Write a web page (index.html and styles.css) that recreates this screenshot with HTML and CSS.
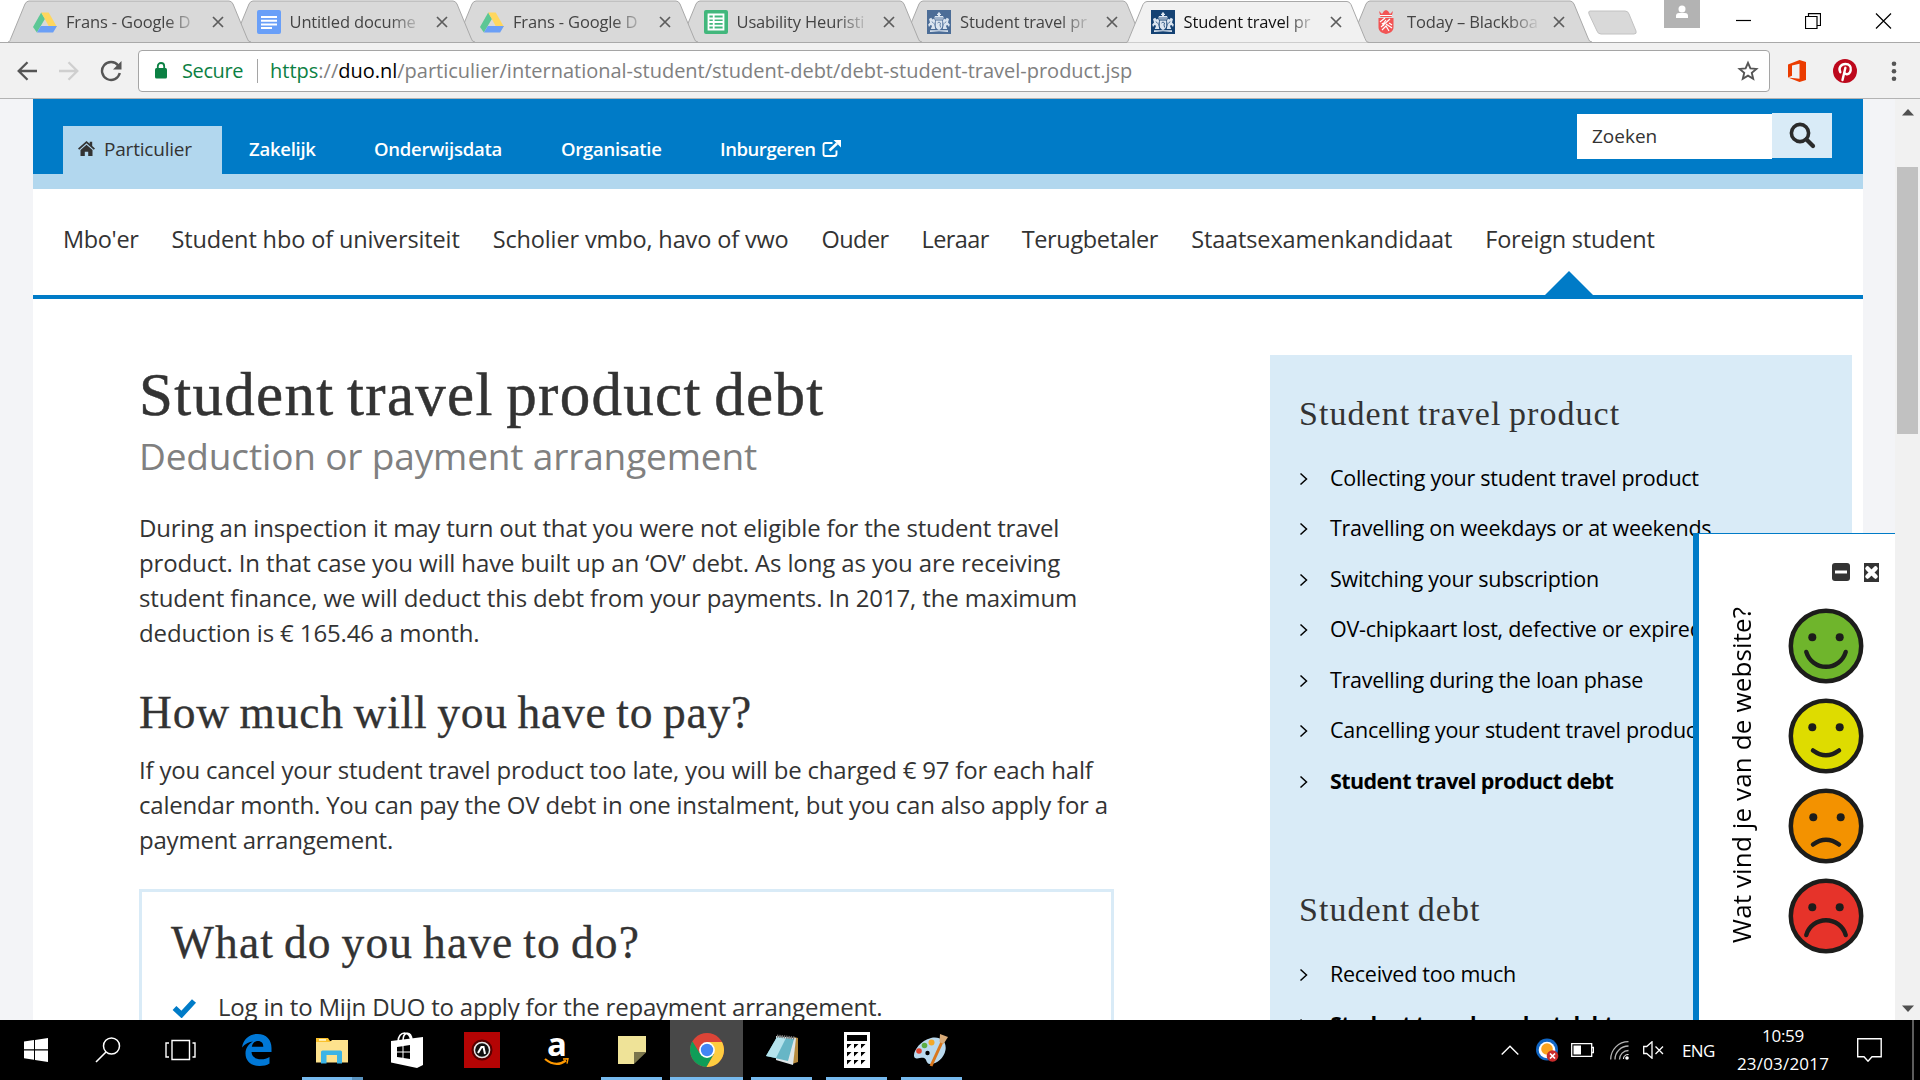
FILE: index.html
```html
<!DOCTYPE html>
<html lang="en">
<head>
<meta charset="utf-8">
<title>Student travel product debt</title>
<link rel="stylesheet" href="styles.css">
</head>
<body>
<svg class="defs" width="0" height="0">
  <symbol id="tabshape" viewBox="0 0 243 42"><path d="M0 42C2 42 2 40 3 38L17 4Q18.500 1 21 1H221Q223.500 1 225 4L239 38Q240 42 243 42" stroke="#a9a9a9"/></symbol>
  <symbol id="drive" viewBox="0 0 24 24"><path fill="#5cc795" d="M8.200 2.500L0 17l3.900 5.500L12 8.800z"/><path fill="#ffd75e" d="M8.200 2.500h7.500L24 17h-7.800z"/><path fill="#6b9ff6" d="M7.800 16H24l-3.900 6.500H3.900z"/></symbol>
  <symbol id="docs" viewBox="0 0 24 24"><rect width="24" height="24" rx="2" fill="#699ff8"/><path stroke="#fff" stroke-width="2" d="M4 7h16M4 10.700h16M4 14.400h16M4 18h11"/></symbol>
  <symbol id="sheets" viewBox="0 0 24 24"><rect width="24" height="24" rx="2" fill="#42b77c"/><path fill="none" stroke="#fff" stroke-width="1.800" d="M4.500 4.500h15v15h-15zM4.500 8.500h15M4.500 12h15M4.500 15.700h15M9.700 4.500v15"/></symbol>
  <symbol id="crest" viewBox="0 0 24 24"><g fill="#dbe5f0"><path d="M11 2.500h2v1.300h1v1.300h-1V6h3l.6 1.500-.8 2H8.200l-.8-2L8 6h3v-.9h-1V3.800h1z"/><path d="M8.700 10.500h6.600V16c0 2.200-1.700 3.300-3.300 4-1.600-.7-3.300-1.800-3.300-4z"/><path d="M2 9l2.200-1.200 1.300 1.700 1.700-1 .9 2.400-.8 3.700 1 4.500H3.800l1.300-3.300L3.500 15 2 17l-.8-2.600L3 12.500zM22 9l-2.200-1.200-1.300 1.700-1.700-1-.9 2.400.8 3.700-1 4.500h4.500l-1.300-3.300 1.600-.8L22 17l.8-2.600-1.800-1.900z"/><path d="M3 20.300h18V22l-9-.7-9 .7z"/></g><path fill="none" stroke="currentColor" stroke-width=".8" d="M10.500 13l1.500-1 1.500 1-.5 2 .7 2.500M5 11.500l1.500 2M19 11.500l-1.500 2M8 8h8"/></symbol>
  <symbol id="shield" viewBox="0 0 18 24"><path fill="#f25454" d="M2 1l3 3 2-3 2-1 2 1 2 3 3-3-1.500 6h-11z"/><path fill="#f25454" d="M1.500 8h15v9c0 4-3 6-7.500 7-4.500-1-7.500-3-7.500-7z"/><path fill="none" stroke="#fff" stroke-width="1.200" d="M3 12l5-4M4 17l9-8M9 14l6 4M5 20l4-4 3 5M12 13l3 2M3 5.500h12M9 10l-3 4M5 13l2 3"/></symbol>
  <symbol id="x" viewBox="0 0 12 12"><path d="M1 1l10 10M11 1L1 11" fill="none" stroke="#5c5c5c" stroke-width="1.700"/></symbol>
  <symbol id="chev" viewBox="0 0 10 14"><path d="M1.500 1.500L7.500 7l-6 5.500" fill="none" stroke="#000" stroke-width="1.500"/></symbol>
</svg>

<header class="tabstrip">
  <div class="tab"><svg class="shape"><use href="#tabshape"/></svg><svg class="fav"><use href="#drive"/></svg><span>Frans - Google D</span><svg class="close"><use href="#x"/></svg></div>
  <div class="tab"><svg class="shape"><use href="#tabshape"/></svg><svg class="fav"><use href="#docs"/></svg><span>Untitled docume</span><svg class="close"><use href="#x"/></svg></div>
  <div class="tab"><svg class="shape"><use href="#tabshape"/></svg><svg class="fav"><use href="#drive"/></svg><span>Frans - Google D</span><svg class="close"><use href="#x"/></svg></div>
  <div class="tab"><svg class="shape"><use href="#tabshape"/></svg><svg class="fav"><use href="#sheets"/></svg><span>Usability Heuristi</span><svg class="close"><use href="#x"/></svg></div>
  <div class="tab"><svg class="shape"><use href="#tabshape"/></svg><svg class="fav crest dim"><use href="#crest"/></svg><span>Student travel pr</span><svg class="close"><use href="#x"/></svg></div>
  <div class="tab active"><svg class="shape"><use href="#tabshape"/></svg><svg class="fav crest"><use href="#crest"/></svg><span>Student travel pr</span><svg class="close"><use href="#x"/></svg></div>
  <div class="tab"><svg class="shape"><use href="#tabshape"/></svg><svg class="fav"><use href="#shield"/></svg><span>Today – Blackboa</span><svg class="close"><use href="#x"/></svg></div>
  <svg class="newtab" width="52" height="26" viewBox="0 0 52 26"><path d="M3 1h35q3 0 4 3l7 17q1 3-2 3H14q-3 0-4-3L2 4Q1 1 3 1z" fill="#d9d9d9" stroke="#c2c2c2"/></svg>
  <div class="wincontrols">
    <svg class="user" width="36" height="28" viewBox="0 0 36 28"><path fill="#b3b3b3" d="M0 0h36v28H0z"/><circle cx="18" cy="9" r="3.500" fill="#fff"/><path fill="#fff" d="M12 18v-2q0-3 3-3h6q3 0 3 3v2z"/></svg>
    <svg width="15" height="17" viewBox="0 0 15 17"><path d="M0 7.500h15" stroke="#000" stroke-width="1.200"/></svg>
    <svg width="16" height="16" viewBox="0 0 16 16"><path d="M.5 3.500h11.500v12H.5zM3.500 3.500V.6h12v11.900H12" fill="none" stroke="#000" stroke-width="1.200"/></svg>
    <svg width="17" height="16" viewBox="0 0 17 16"><path d="M1 .5l15 15M16 .5l-15 15" stroke="#000" stroke-width="1.200"/></svg>
  </div>
</header>

<div class="toolbar">
  <svg class="back" width="20" height="20" viewBox="0 0 20 20"><path d="M20 10H2M10.500 1.200L1.700 10l8.800 8.800" fill="none" stroke="#555" stroke-width="2.300"/></svg>
  <svg class="fwd" width="20" height="20" viewBox="0 0 20 20"><path d="M0 10h18M9.500 1.200l8.800 8.800-8.800 8.800" fill="none" stroke="#cfcfcf" stroke-width="2.300"/></svg>
  <svg class="reload" width="22" height="22" viewBox="0 0 22 22"><path d="M18.200 5.500A9 9 0 1 0 19.800 13" fill="none" stroke="#555" stroke-width="2.400"/><path fill="#555" d="M21.500 1v8.500H13z"/></svg>
  <div class="omnibox">
    <svg width="12" height="17" viewBox="0 0 12 17"><rect y="6" width="12" height="10.500" rx="1.500" fill="#0b8043"/><path d="M2.800 7V4.200a3.200 3.200 0 0 1 6.400 0V7" fill="none" stroke="#0b8043" stroke-width="1.800"/></svg>
    <span class="secure">Secure</span><i class="sep"></i>
    <span class="url"><b>https</b>://<em>duo.nl</em>/particulier/international-student/student-debt/debt-student-travel-product.jsp</span>
    <svg class="star" width="22" height="22" viewBox="0 0 22 22"><path d="M11 2.800l2.400 5.600 6 .5-4.600 4 1.400 5.900L11 15.700l-5.200 3.100 1.400-5.900-4.600-4 6-.5z" fill="none" stroke="#555" stroke-width="1.900"/></svg>
  </div>
  <svg class="office" width="18" height="22" viewBox="0 0 18 22"><path fill="#eb3c00" d="M0 4.500L11.500 0 18 2v18l-6.500 2L0 17.500l11.500 1.300V3.700L4 5.600v10.200L0 17.500z"/></svg>
  <svg class="pin" width="24" height="24" viewBox="0 0 24 24"><circle cx="12" cy="12" r="12" fill="#bd081c"/><path d="M7.300 13.200C5 9 8 5 12.400 5c4 0 6 2.700 5.300 6.200-.8 4.300-5.200 5.300-6.200 2.500M12.400 8.800L9.500 21" fill="none" stroke="#fff" stroke-width="2.400" stroke-linecap="round"/></svg>
  <svg class="dots" width="6" height="20" viewBox="0 0 6 20"><g fill="#555"><circle cx="3" cy="2.700" r="2.300"/><circle cx="3" cy="10.200" r="2.300"/><circle cx="3" cy="17.700" r="2.300"/></g></svg>
</div>

<div class="viewport">
  <div class="page">
    <div class="topbar">
      <nav class="topnav">
        <a class="current"><svg width="17" height="15" viewBox="0 0 17 15"><path fill="#333" d="M8.500 0L0 7.500l1.200 1.200 7.300-6.400 7.300 6.400L17 7.500l-2.800-2.600V.8h-2.500v2zM2.500 9v6h4.300v-4.300h3.400V15h4.300V9l-6-5.200z"/></svg><span>Particulier</span></a>
        <a class="n2">Zakelijk</a><a class="n3">Onderwijsdata</a><a class="n4">Organisatie</a><a class="n5">Inburgeren<svg width="20" height="17" viewBox="0 0 20 17"><path d="M10.500 3H3.500Q1.500 3 1.500 5v9q0 2 2 2h9q2 0 2-2v-3.500" fill="none" stroke="#fff" stroke-width="1.900"/><path d="M7.500 10.500L15 3.500" stroke="#fff" stroke-width="2.600"/><path fill="#fff" d="M11.500 0H19v7.500z"/></svg></a>
      </nav>
      <div class="search"><div class="field">Zoeken</div><div class="go"><svg width="27" height="27" viewBox="0 0 27 27"><circle cx="11" cy="11" r="8.600" fill="none" stroke="#2b2b2b" stroke-width="3.600"/><path d="M17.500 17.500l6.500 6.500" stroke="#2b2b2b" stroke-width="4.200" stroke-linecap="round"/></svg></div></div>
    </div>
    <nav class="subnav">
      <a>Mbo'er</a><a class="wide">Student hbo of universiteit</a><a class="wide">Scholier vmbo, havo of vwo</a><a class="tight">Ouder</a><a class="tight">Leraar</a><a>Terugbetaler</a><a class="wide">Staatsexamenkandidaat</a><a class="here">Foreign student</a>
    </nav>
    <div class="columns">
      <main>
        <h1>Student travel product debt</h1>
        <p class="sub">Deduction or payment arrangement</p>
        <p class="text">During an inspection it may turn out that you were not eligible for the student travel<br><span class="loose">product. In that case you will have built up an ‘OV’ debt. As long as you are receiving<br>student finance, we will deduct this debt from your payments. In 2017, the maximum<br>deduction is € 165.46 a month.</span></p>
        <h2>How much will you have to pay?</h2>
        <p class="text second">If you cancel your student travel product too late, you will be charged € 97 for each half<br>calendar month. You can pay the OV debt in one instalment, but you can also apply for a<br>payment arrangement.</p>
        <section class="box">
          <h2>What do you have to do?</h2>
          <p class="todo"><svg width="25" height="20" viewBox="0 0 25 20"><path d="M2.500 10l7 6.500L22 3" fill="none" stroke="#007bc7" stroke-width="5.500"/></svg>Log in to Mijn DUO to apply for the repayment arrangement.</p>
        </section>
      </main>
      <aside>
        <h3>Student travel product</h3>
        <ul>
          <li><svg><use href="#chev"/></svg>Collecting your student travel product</li>
          <li><svg><use href="#chev"/></svg>Travelling on weekdays or at weekends</li>
          <li><svg><use href="#chev"/></svg>Switching your subscription</li>
          <li><svg><use href="#chev"/></svg>OV-chipkaart lost, defective or expired</li>
          <li><svg><use href="#chev"/></svg>Travelling during the loan phase</li>
          <li><svg><use href="#chev"/></svg>Cancelling your student travel product</li>
          <li class="bold"><svg><use href="#chev"/></svg>Student travel product debt</li>
        </ul>
        <h3 class="next">Student debt</h3>
        <ul>
          <li><svg><use href="#chev"/></svg>Received too much</li>
          <li class="bold"><svg><use href="#chev"/></svg>Student travel product debt</li>
        </ul>
      </aside>
    </div>
  </div>
  <div class="scrollbar">
    <svg width="12" height="7" viewBox="0 0 12 7"><path d="M0 6.500L6 0l6 6.500z" fill="#505050"/></svg>
    <div class="thumb"></div>
    <svg class="down" width="12" height="7" viewBox="0 0 12 7"><path d="M0 .5L6 7l6-6.500z" fill="#505050"/></svg>
  </div>
  <div class="feedback">
    <div class="question">Wat vind je van de website?</div>
    <div class="rating">
      <div class="tools"><svg width="18" height="18" viewBox="0 0 18 18"><rect width="18" height="18" rx="3" fill="#333"/><path d="M3 9h12" stroke="#fff" stroke-width="3"/></svg><svg width="15" height="19" viewBox="0 0 15 19"><path fill="#333" d="M0 0h15v19H0z"/><path d="M3.500 5.500l8 8M11.500 5.500l-8 8" stroke="#fff" stroke-width="4.500" stroke-linecap="round"/></svg></div>
      <svg class="face" viewBox="0 0 76 76"><circle cx="38" cy="38" r="35.200" fill="#6fb52c" stroke="#1d1d1b" stroke-width="4.500"/><g fill="#1d1d1b"><circle cx="24.300" cy="29.300" r="4"/><circle cx="51.700" cy="29.300" r="4"/></g><path d="M18.300 44a20.500 20.500 0 0 0 39.400 0"/></svg>
      <svg class="face" viewBox="0 0 76 76"><circle cx="38" cy="38" r="35.200" fill="#dedc00" stroke="#1d1d1b" stroke-width="4.500"/><g fill="#1d1d1b"><circle cx="24.300" cy="29.300" r="4"/><circle cx="51.700" cy="29.300" r="4"/></g><path d="M25 52.500q13 9.500 26 0"/></svg>
      <svg class="face" viewBox="0 0 76 76"><circle cx="38" cy="38" r="35.200" fill="#f39200" stroke="#1d1d1b" stroke-width="4.500"/><g fill="#1d1d1b"><circle cx="25.300" cy="29.300" r="4"/><circle cx="52.700" cy="29.300" r="4"/></g><path d="M25 56.500q13-9.500 26 0"/></svg>
      <svg class="face" viewBox="0 0 76 76"><circle cx="38" cy="38" r="35.200" fill="#e6332a" stroke="#1d1d1b" stroke-width="4.500"/><g fill="#1d1d1b"><circle cx="24.300" cy="29.300" r="4"/><circle cx="51.700" cy="29.300" r="4"/></g><path d="M18.300 57a20.500 20.500 0 0 1 39.400 0"/></svg>
    </div>
  </div>
</div>

<footer class="taskbar">
  <div class="app start"><svg width="24" height="24" viewBox="0 0 24 24"><path fill="#fff" d="M0 3.500L10 2v9.300H0zM11 1.900L24 0v11.300H11zM0 12.400h10v9.300L0 20.300zM11 12.400h13V24l-13-1.900z"/></svg></div>
  <div class="app"><svg width="26" height="26" viewBox="0 0 26 26"><circle cx="16.500" cy="9" r="8" fill="none" stroke="#fff" stroke-width="1.500"/><path d="M11 15L1 25" stroke="#fff" stroke-width="1.600"/></svg></div>
  <div class="app taskview"><svg width="31" height="22" viewBox="0 0 31 22"><path d="M7 1.500h17.500v19H7zM4 4H1v14h3M27.500 4H30v14h-2.500" fill="none" stroke="#fff" stroke-width="1.400"/></svg></div>
  <div class="app"><svg width="30" height="32" viewBox="0 0 30 32"><path fill="#0078d7" d="M0 13.500C1.500 5 7.500 0 15.500 0 24.500 0 29.500 6 29.500 14v4H9.500c.3 5 4.500 7.300 9.500 7.300 3.500 0 6-.8 8.500-2.300v6.500C24.500 31.300 21.500 32 17.500 32 9 32 3.500 27 3.500 19.500c0-5.500 3-9.500 7.500-12C7 7.700 3 9.700 0 13.500zM9.800 12.700h11.500c0-3.500-1.800-5.700-5.300-5.700-3.300 0-5.500 2.200-6.200 5.700z"/></svg></div>
  <div class="app run multi"><svg width="32" height="27" viewBox="0 0 32 27"><path fill="#fac12c" d="M0 1h12l2 3h16v4H0z"/><path fill="#fde28d" d="M0 5h14l2-2h16v22.500H0z"/><path fill="#fff3bf" d="M3 2h7v1.800H3z"/><path fill="#3bb4e6" d="M5 26.500V15q0-1.500 1.500-1.500h18Q26 13.500 26 15v11.500h-5V18H10.500v8.500z"/></svg></div>
  <div class="app"><svg width="32" height="36" viewBox="0 0 32 36"><path d="M7 10c0-12 13-12 13 0M12 9c0-10 8-10 9-1" fill="none" stroke="#fff" stroke-width="1.600"/><path fill="#fff" d="M0 9l32-4v28l-6 3L0 30.500z"/><path fill="#000" d="M6 15l5.500-.8v5.300H6zM12.500 14l6.500-1v6.500h-6.500zM6 20.500h5.500v5.300L6 25zM12.500 20.500H19V27l-6.500-1z"/></svg></div>
  <div class="app"><svg width="36" height="36" viewBox="0 0 36 36"><path fill="#b40404" d="M0 0h36v36H0z"/><circle cx="18" cy="18" r="8.500" fill="#111" stroke="#560000" stroke-width="4"/><circle cx="18" cy="18" r="7.600" fill="#111" stroke="#e7e7e7" stroke-width="1.500"/><path d="M14 21l3.500-6h2l1.500 7" fill="none" stroke="#fff" stroke-width="2"/></svg></div>
  <div class="app amazon"><b>a</b><svg width="26" height="8" viewBox="0 0 26 8"><path d="M1 1q11 9 21 1.500" fill="none" stroke="#f90" stroke-width="2.200"/><path d="M19 1l5-.3-1 5" fill="none" stroke="#f90" stroke-width="1.400"/></svg></div>
  <div class="app run"><svg width="28" height="28" viewBox="0 0 28 28"><path fill="#efe398" d="M0 0h28v16.500H16V28H0z"/><path fill="#7a754c" d="M16 16.500h12L16 28z"/></svg></div>
  <div class="app run focus"><svg width="34" height="34" viewBox="0 0 34 34"><circle cx="17" cy="17" r="17" fill="#db4437"/><path fill="#0f9d58" d="M2.400 8.300A17 17 0 0 0 16.500 34L24 21 9.500 20z"/><path fill="#ffcd40" d="M32 9H17l7 12-7.500 13A17 17 0 0 0 32 9z"/><circle cx="17" cy="17" r="7.900" fill="#fff"/><circle cx="17" cy="17" r="6.200" fill="#4285f4"/></svg></div>
  <div class="app run"><svg width="34" height="32" viewBox="0 0 34 32"><path fill="#b68a3e" d="M29 3l4 1v24l-6 2z"/><path fill="#dfe6e8" d="M11 2l20 2-3 27-17-5z"/><path fill="#67b6c6" d="M12 3l17 2-6 22L1 22z"/><path fill="#b5e3ec" d="M12 3l9 1-10 20-10-2z"/><path d="M12 2l18 2" stroke="#777" stroke-width="3" stroke-dasharray="1.300 1"/></svg></div>
  <div class="app run"><svg width="26" height="36" viewBox="0 0 26 36"><path fill="#fff" d="M0 0h26v36H0z"/><path fill="#000" d="M3 3h20v6H3zM3 12h4.500L3 16.500zM10 12h4.500L10 16.500zM17 12h4.500L17 16.500zM3 20h4.500L3 24.500zM10 20h4.500L10 24.500zM17 20h4.500L17 24.500zM3 28h4.500L3 32.500zM10 28h4.500L10 32.500zM17 28h4.500L17 32.500z"/></svg></div>
  <div class="app run"><svg width="36" height="34" viewBox="0 0 36 34"><path fill="#b9d9ee" d="M18 5c9-2 16 3 14.500 12C31 25 24 31 17 31c-4 0-3-5-6-6s-7 2-9.500-.5C-1 20 6 8 18 5z"/><circle cx="14.500" cy="20" r="2.200" fill="#000"/><circle cx="6" cy="18" r="2.800" fill="#e2452f"/><circle cx="11.500" cy="12.500" r="2.800" fill="#5cae42"/><circle cx="18.500" cy="9.500" r="3" fill="#f3a827"/><path d="M29 9L18 33" stroke="#d9771d" stroke-width="3"/><path fill="#d9ab78" d="M27 1l8 3-4.500 7-4-2z"/></svg></div>
  <div class="tray">
    <svg width="18" height="10" viewBox="0 0 18 10"><path d="M.7 9.500L9 1.200l8.300 8.300" fill="none" stroke="#fff" stroke-width="1.400"/></svg>
    <svg class="t1" width="24" height="24" viewBox="0 0 24 24"><circle cx="12" cy="11.500" r="11" fill="#1166c4"/><circle cx="12" cy="12" r="8.300" fill="#fff"/><circle cx="12" cy="11" r="5.800" fill="#fba31d"/><circle cx="17.500" cy="18" r="5.800" fill="#c92b2b"/><path d="M15 15.500l5 5M20 15.500l-5 5" stroke="#fff" stroke-width="1.700"/></svg>
    <svg class="t2" width="23" height="14" viewBox="0 0 23 14"><path d="M.7.700h20v12.600H.7zM20.700 4.500h1.800v5h-1.800" fill="none" stroke="#fff" stroke-width="1.300"/><path fill="#fff" d="M2.500 2.500H10v9H2.500z"/></svg>
    <svg class="t3" width="19" height="19" viewBox="0 0 19 19"><g fill="none" stroke="#b5b5b5" stroke-width="1.300"><path d="M.7 18.500C.7 8.500 8.500.7 18.500.7M5 18.500C5 11 11 5 18.500 5M9.500 18.500c0-5 4-9 9-9"/></g><path d="M13.500 18q0-4.500 5-4.500" fill="none" stroke="#fff" stroke-width="1"/><circle cx="17" cy="17" r="1.800" fill="#fff"/></svg>
    <svg class="t4" width="21" height="18" viewBox="0 0 21 18"><path d="M.7 5.500h3L9 .8v16.400l-5.300-4.700h-3zM12.500 5.500l7.500 7.500M20 5.500L12.500 13" fill="none" stroke="#fff" stroke-width="1.300"/></svg>
    <span class="lang">ENG</span>
    <div class="clock"><span>10:59</span><span class="date">23/03/2017</span></div>
    <svg class="note" width="25" height="24" viewBox="0 0 25 24"><path d="M.7.700h23.500v18H15l-4 4.500-4-4.500H.7z" fill="none" stroke="#fff" stroke-width="1.400"/></svg>
    <i class="peek"></i>
  </div>
</footer>
</body>
</html>
```
FILE: styles.css
```css
* { box-sizing: border-box; }
html, body { margin: 0; height: 1080px; overflow: hidden; }
body {
  width: 1920px; display: flex; flex-direction: column;
  font-family: "Open Sans", "Noto Sans", sans-serif; color: #333; background: #fff; white-space: nowrap;
}
svg { display: block; flex: none; }
.defs { position: absolute; }
h1, h2, h3, p, ul { margin: 0; padding: 0; font-weight: 400; }
h1, h2, h3 { font-family: "Liberation Serif", "Times New Roman", serif; }
i, em { font-style: normal; }

/* browser tabs */
.tabstrip { height: 43px; flex: none; display: flex; padding-left: 8px; border-bottom: 1px solid #a9a9a9; }
.tab { position: relative; width: 243px; height: 42px; margin-right: -19.500px; display: flex; align-items: center; padding-left: 25px; font-size: 16.500px; letter-spacing: -.15px; color: #444; z-index: 1; }
.tab .shape { position: absolute; left: 0; top: 0; width: 243px; height: 42px; fill: #d9d9d9; z-index: -1; }
.tab span { width: 132px; margin-left: 9px; overflow: hidden; line-height: 40px; padding-top: 1px; -webkit-mask-image: linear-gradient(90deg, #000 100px, transparent 134px); mask-image: linear-gradient(90deg, #000 100px, transparent 134px); }
.fav { width: 24px; height: 24px; margin-top: 2px; }
.crest { background: #154273; color: #154273; }
.crest.dim { background: #4c6d97; color: #4c6d97; }
.close { width: 12px; height: 12px; margin: 2px 0 0 14px; }
.tab:nth-child(1) { z-index: 7; } .tab:nth-child(2) { z-index: 6; } .tab:nth-child(3) { z-index: 5; } .tab:nth-child(4) { z-index: 4; } .tab:nth-child(5) { z-index: 3; }
.tab.active { z-index: 8; color: #111; height: 43px; padding-bottom: 1px; }
.tab.active .shape { fill: #f1f1f1; height: 43px; }
.newtab { margin: 10px 0 0 14px; }
.wincontrols { display: flex; margin-left: 25px; gap: 54px; padding-top: 13px; }
.wincontrols .user { margin: -13px -18px 0 0; }

/* address bar */
.toolbar { height: 56px; flex: none; display: flex; align-items: center; background: #f1f1f1; border-bottom: 1px solid #b3b3b3; padding: 0 23px 0 17px; }
.fwd { margin-left: 22px; }
.reload { margin: 0 16px 0 21px; }
.omnibox { width: 1632px; height: 42px; border: 1px solid #a5a5a5; border-radius: 4px; background: #fff; display: flex; align-items: center; padding: 0 10px 0 16px; font-size: 20px; }
.secure { margin-left: 15px; color: #0b8043; letter-spacing: -.4px; }
.sep { width: 1px; height: 24px; background: #a5a5a5; margin: 0 12px 0 14px; }
.url { color: #808080; letter-spacing: -.01px; }
.url b { font-weight: 400; color: #0b8043; }
.url em { color: #000; }
.star { margin-left: auto; }
.office { margin-left: 18px; }
.pin { margin-left: 27px; }
.dots { margin-left: auto; }

/* web page */
.viewport { position: relative; height: 921px; flex: none; display: flex; background: #f3f4f7; overflow: hidden; padding-left: 33px; }
.page { width: 1830px; background: #fff; }
.topbar { height: 90px; background: #007bc7; border-bottom: 15px solid #b2d7ee; display: flex; justify-content: space-between; padding: 0 31px 0 30px; }
.topnav { display: flex; align-items: flex-end; color: #fff; font-size: 18.500px; font-weight: 600; letter-spacing: -.25px; }
.topnav a { display: flex; align-items: center; height: 48px; padding-bottom: 3px; }
.topnav .current { background: #b2d7ee; color: #333; width: 159px; padding-left: 15px; gap: 9px; font-size: 19px; font-weight: 400; letter-spacing: -.2px; }
.topnav .n2 { margin-left: 27px; width: 125px; } .topnav .n3 { width: 187px; } .topnav .n4 { width: 159px; } .topnav .n5 { gap: 7px; letter-spacing: -.45px; }
.search { display: flex; padding-top: 14px; }
.field { width: 195px; height: 45px; margin-top: 1px; background: #fff; padding-left: 15px; font-size: 19px; line-height: 44px; }
.go { width: 60px; height: 45px; background: #d9ebf7; display: flex; align-items: center; justify-content: center; }
.subnav { height: 110px; border-bottom: 4px solid #007bc7; display: flex; gap: 33px; padding-left: 30px; line-height: 101px; font-size: 23.500px; }
.subnav a { letter-spacing: -.35px; }
.subnav .wide { letter-spacing: -.13px; }
.subnav .tight { letter-spacing: -.6px; }
.subnav .here { position: relative; letter-spacing: -.22px; }
.here::after { content: ""; position: absolute; left: 60px; top: 82px; border: 24px solid transparent; border-top: 0; border-bottom-color: #007bc7; }
.columns { display: flex; height: 760px; }
main { width: 974px; margin-left: 106px; padding-top: 61px; }
h1 { font-size: 61px; line-height: 70px; letter-spacing: 1.300px; word-spacing: -4px; -webkit-text-stroke: .5px #333; }
.sub { font-size: 37px; line-height: 52px; color: #808080; letter-spacing: -.15px; margin-bottom: 28px; }
.text, .todo { font-size: 24px; line-height: 35px; letter-spacing: -.2px; }
.loose { letter-spacing: -.13px; }
h2 { font-size: 45.500px; line-height: 50px; margin: 38px 0 14px; letter-spacing: .8px; word-spacing: -2.500px; -webkit-text-stroke: .3px #333; }
.box { width: 975px; margin-top: 32px; border: 3px solid #d9ebf7; height: 160px; padding: 26px 0 0 29px; }
.box h2 { margin: 0 0 21px; letter-spacing: 1.100px; }
.todo { display: flex; align-items: center; }
.todo svg { margin: 3px 21px 0 1px; }
aside { width: 582px; height: 665px; margin: 56px 0 0 157px; background: #d9ebf7; padding: 38px 0 0 29px; }
h3 { font-size: 34px; line-height: 40px; margin-bottom: 18.500px; letter-spacing: 1.050px; word-spacing: -2px; padding-top: 1px; }
h3.next { margin-top: 83px; }
ul { list-style: none; }
li { height: 50.500px; line-height: 50.400px; font-size: 21.500px; letter-spacing: -.26px; color: #000; display: flex; align-items: center; }
li svg { width: 10px; height: 14px; margin: 2px 21px 0 0; }
.bold { font-weight: 700; letter-spacing: -.6px; }

.scrollbar { width: 25px; margin-left: auto; background: #f1f1f1; display: flex; flex-direction: column; align-items: center; padding: 10px 0 8px; }
.thumb { width: 21px; height: 267px; background: #c1c1c1; margin-top: 51px; }
.scrollbar .down { margin-top: auto; }

/* feedback panel pinned to the page's lower right corner */
.feedback { position: absolute; right: 25px; bottom: 0; width: 202px; height: 487px; background: #fff; border-left: 6px solid #007bc7; border-top: 1px solid #007bc7; display: flex; }
.question { writing-mode: vertical-rl; transform: rotate(180deg); color: #000; font-size: 26px; letter-spacing: .13px; line-height: 36px; margin-left: 24px; width: 36px; text-align: right; padding-bottom: 73px; }
.rating { margin-left: 29px; }
.tools { display: flex; gap: 14px; padding: 29px 0 0 44px; height: 74px; }
.face { width: 76px; height: 76px; margin-bottom: 14px; fill: none; stroke-linecap: round; }
.face path { stroke: #1d1d1b; stroke-width: 4.500px; }

/* taskbar */
.taskbar { height: 60px; flex: none; background: #000; display: flex; color: #fff; }
.app { width: 61px; margin-right: 13.900px; height: 60px; display: flex; align-items: center; justify-content: center; border-bottom: 3px solid transparent; padding-top: 3px; }
.app.start { width: 61px; margin-left: 5px; margin-right: 11px; }
.app.taskview { padding-right: 4px; }
.run { border-bottom-color: #76b9ed; }
.run.multi { border-image: linear-gradient(90deg, #76b9ed 48px, #5a93bf 48px) 3; }
.focus { background: #484848; width: 73px; margin: 0 8px 0 -6px; }
.amazon { flex-direction: column; }
.amazon b { font-size: 33px; line-height: 20px; height: 24px; }
.tray { margin-left: auto; display: flex; align-items: center; width: 419px; }
.t1 { margin-left: 16px; } .t2 { margin-left: 12px; } .t3 { margin-left: 16px; } .t4 { margin-left: 14px; }
.lang { width: 36px; margin-left: 18px; font-size: 17px; letter-spacing: -.6px; }
.clock { width: 96px; margin-left: 17px; display: flex; flex-direction: column; align-items: center; font-size: 17px; line-height: 28px; letter-spacing: -.3px; }
.clock .date { letter-spacing: .2px; }
.note { margin-left: 26px; }
.peek { width: 2px; height: 60px; margin-left: auto; margin-right: 6px; background: #5c5c5c; }
```
